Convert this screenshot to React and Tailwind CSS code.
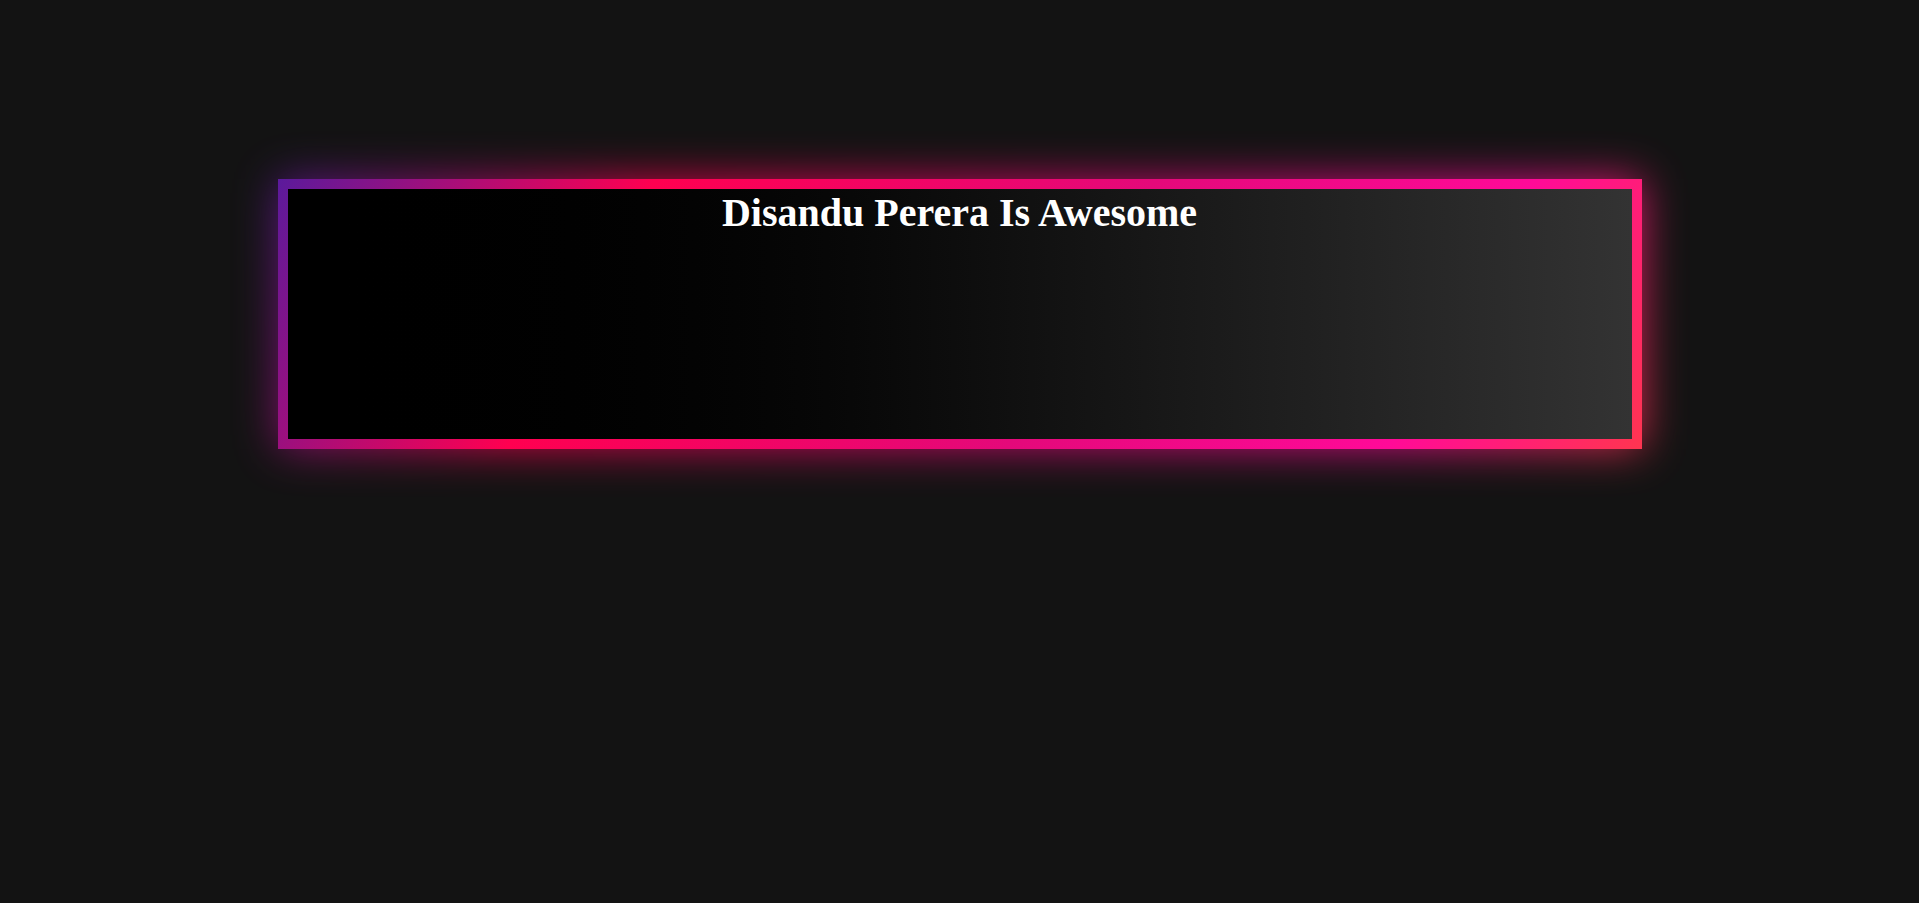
export default function App() {
  return (
    <div className="min-h-[903px] w-full bg-[#131313] pt-[179px]">
      <div className="relative mx-auto h-[270px] w-[1364px]">
        {/* glow behind the frame */}
        <div className="absolute inset-0 bg-[linear-gradient(119deg,#5b1a9c_0%,#ff0050_25%,#e4097a_58%,#ff0a98_83%,#ff3550_100%)] opacity-80 blur-[22px]" />
        <div className="relative h-full w-full bg-[linear-gradient(119deg,#5b1a9c_0%,#ff0050_25%,#e4097a_58%,#ff0a98_83%,#ff3550_100%)] p-[10px]">
          <div className="h-full w-full bg-gradient-to-r from-[#000000] to-[#333333]">
            <h1 className="m-0 text-center font-['Liberation_Serif',_'Times_New_Roman',_serif] text-[40px] font-bold leading-[normal] text-white">
              Disandu Perera Is Awesome
            </h1>
          </div>
        </div>
      </div>
    </div>
  );
}
